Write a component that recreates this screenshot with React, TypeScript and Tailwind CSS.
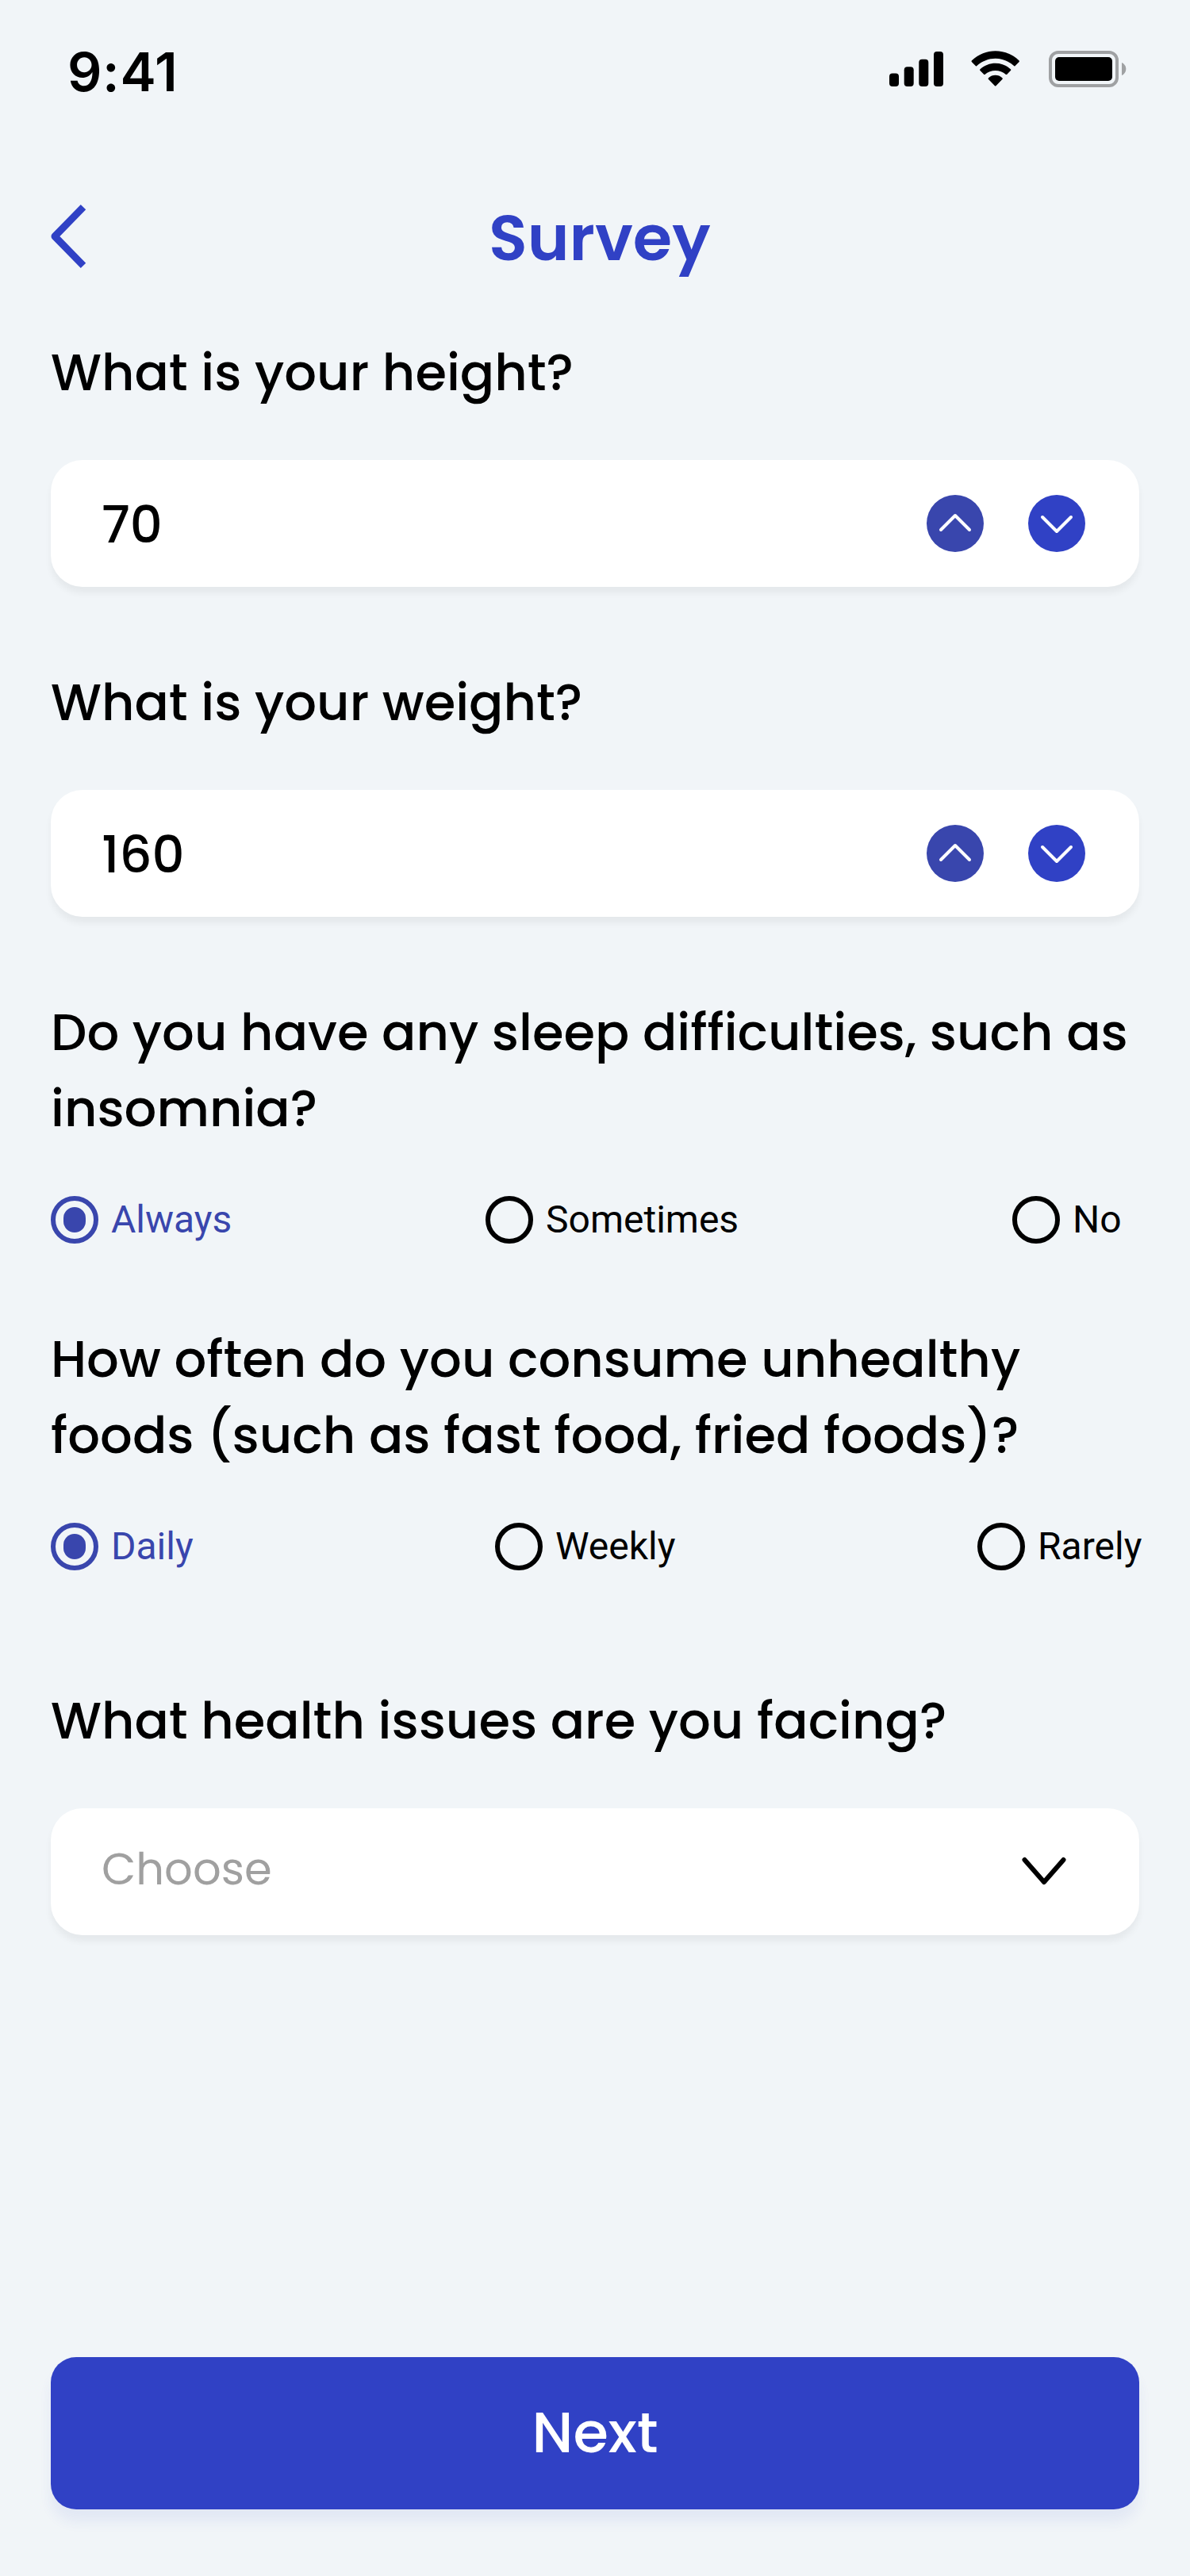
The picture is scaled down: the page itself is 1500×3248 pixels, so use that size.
import type { ReactNode } from "react";

const BRAND = "text-[#3041c5]";

function SignalIcon() {
  return (
    <svg width="68" height="44" viewBox="0 0 68 44" fill="currentColor">
      <rect x="0" y="27.5" width="12" height="16.5" rx="4" />
      <rect x="18.7" y="19.3" width="12" height="24.7" rx="4" />
      <rect x="37.3" y="9.7" width="12" height="34.3" rx="4" />
      <rect x="56" y="0" width="12" height="44" rx="4" />
    </svg>
  );
}

function WifiIcon() {
  return (
    <svg width="62" height="46" viewBox="0 0 62 46" fill="currentColor">
      <path d="M1 12.2Q0 13.2 1 14.2L6 19.2Q6.5 19.6 7 19.2C21 6.5 40.400 6.500 54.400 19.200Q54.900 19.600 55.400 19.200L60.400 14.200Q61.400 13.200 60.400 12.200C43.500-3.800 17.900-3.800 1 12.200Z" />
      <path d="M11.500 23.200Q10.600 24.100 11.500 25L16.400 29.900Q16.900 30.300 17.400 29.900C25 23.300 36.400 23.300 44 29.900Q44.500 30.300 45 29.900L49.900 25Q50.800 24.100 49.900 23.200C39.100 13.100 22.300 13.100 11.500 23.200Z" />
      <path d="M22 34.200Q21 35.100 22 36L30 44.200Q30.700 44.900 31.400 44.200L39.400 36Q40.400 35.100 39.400 34.200C34.500 29.600 26.900 29.600 22 34.200Z" />
    </svg>
  );
}

function BatteryIcon() {
  return (
    <svg width="98" height="46" viewBox="0 0 98 46">
      <rect x="2" y="2" width="84" height="42" rx="10" fill="none" stroke="#9fa1a3" strokeWidth="4" />
      <rect x="8" y="8" width="72" height="30" rx="5" fill="#000" />
      <path d="M92 15V31C95.200 29.700 97.300 26.500 97.300 23S95.200 16.300 92 15Z" fill="#9fa1a3" />
    </svg>
  );
}

function StatusBar() {
  return (
    <div className="flex h-[180px] items-start justify-between pr-[80px] pl-[85px]">
      <span className="mt-[50px] font-['Inter',sans-serif] text-[68px] leading-[80px] font-semibold tracking-[0.6px]">
        9:41
      </span>
      <div className="mt-[64px] flex items-start">
        <div className="mt-px">
          <SignalIcon />
        </div>
        <div className="ml-[35px]">
          <WifiIcon />
        </div>
        <div className="ml-[36px]">
          <BatteryIcon />
        </div>
      </div>
    </div>
  );
}

function Question({ children, className }: { children: ReactNode; className: string }) {
  return <h2 className={`text-[64px] leading-[96px] font-medium whitespace-nowrap ${className}`}>{children}</h2>;
}

function Field({ children }: { children: ReactNode }) {
  return (
    <div className="mt-[62px] flex h-[160px] items-center justify-between rounded-[40px] bg-white pl-[64px] shadow-[0_8px_8px_rgba(0,0,0,0.05)]">
      {children}
    </div>
  );
}

function Stepper({ value }: { value: string }) {
  return (
    <Field>
      <span className="pt-[3px] text-[64px] leading-[96px] font-medium">{value}</span>
      <div className="mr-[68px] flex gap-[56px]">
        <button className="size-[72px] rounded-full bg-[#3946ad]">
          <svg width="72" height="72" viewBox="0 0 72 72" fill="none" stroke="#fff" strokeWidth="4" strokeLinecap="round" strokeLinejoin="round">
            <path d="M18 44L36 26L54 44" />
          </svg>
        </button>
        <button className="size-[72px] rounded-full bg-[#3041c5]">
          <svg width="72" height="72" viewBox="0 0 72 72" fill="none" stroke="#fff" strokeWidth="4" strokeLinecap="round" strokeLinejoin="round">
            <path d="M18 28L36 46L54 28" />
          </svg>
        </button>
      </div>
    </Field>
  );
}

function Radio({ label, checked = false, className = "" }: { label: string; checked?: boolean; className?: string }) {
  return (
    <div className={`flex shrink-0 items-center gap-[16px] ${checked ? "text-[#3946ad]" : "text-black"} ${className}`}>
      <span className="flex size-[60px] shrink-0 items-center justify-center rounded-full border-[6px] border-current">
        {checked && <span className="h-[32px] w-[28px] rounded-[14px] bg-current" />}
      </span>
      <span className="font-['Roboto',sans-serif] text-[48px] leading-[60px]">{label}</span>
    </div>
  );
}

export default function App() {
  return (
    <div className="h-[3248px] w-[1500px] overflow-hidden bg-[#f1f5f8] font-['Poppins','Inter',sans-serif] text-black">
      <StatusBar />
      <main className="flex flex-col px-[64px]">
        <header className={`mt-[60px] flex h-[120px] items-center ${BRAND}`}>
          <svg className="-mt-[4px]" width="46" height="80" viewBox="0 0 46 80" fill="none" stroke="currentColor" strokeWidth="9" strokeLinejoin="round">
            <path d="M41 3.200L5 40L41 76.800" />
          </svg>
          <h1 className="ml-[506px] text-[80px] leading-[120px] font-semibold">Survey</h1>
        </header>

        <Question className="mt-[62px]">What is your height?</Question>
        <Stepper value="70" />

        <Question className="mt-[98px]">What is your weight?</Question>
        <Stepper value="160" />

        <Question className="mt-[98px]">
          Do you have any sleep difficulties, such as
          <br />
          insomnia?
        </Question>
        <div className="mt-[62px] flex h-[60px]">
          <Radio label="Always" checked className="w-[548px]" />
          <Radio label="Sometimes" className="w-[664px]" />
          <Radio label="No" />
        </div>

        <Question className="mt-[98px]">
          How often do you consume unhealthy
          <br />
          foods (such as fast food, fried foods)?
        </Question>
        <div className="mt-[62px] flex h-[60px]">
          <Radio label="Daily" checked className="w-[560px]" />
          <Radio label="Weekly" className="w-[608px]" />
          <Radio label="Rarely" />
        </div>

        <Question className="mt-[142px]">What health issues are you facing?</Question>
        <Field>
          <span className="-mt-[7px] text-[56px] leading-[84px] text-[#a0a0a0]">Choose</span>
          <svg className="mr-[90px]" width="60" height="40" viewBox="0 0 60 40" fill="none" stroke="#000" strokeWidth="6" strokeLinecap="round" strokeLinejoin="round">
            <path d="M5.500 5L30 33L54.500 5" />
          </svg>
        </Field>

        <button className="mt-[532px] flex h-[192px] items-center justify-center rounded-[32px] bg-[#3041c5] pb-[2px] text-[72px] leading-[108px] font-medium text-white shadow-[0_16px_16px_rgba(48,65,197,0.07)]">
          Next
        </button>
      </main>
    </div>
  );
}
